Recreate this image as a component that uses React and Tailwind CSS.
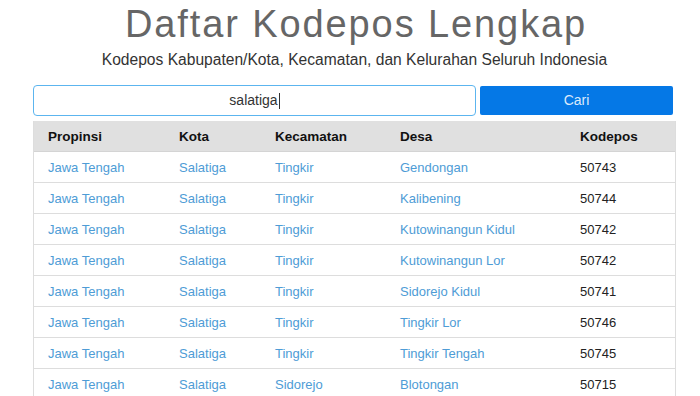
import React from "react";

const rows = [
  ["Jawa Tengah", "Salatiga", "Tingkir", "Gendongan", "50743"],
  ["Jawa Tengah", "Salatiga", "Tingkir", "Kalibening", "50744"],
  ["Jawa Tengah", "Salatiga", "Tingkir", "Kutowinangun Kidul", "50742"],
  ["Jawa Tengah", "Salatiga", "Tingkir", "Kutowinangun Lor", "50742"],
  ["Jawa Tengah", "Salatiga", "Tingkir", "Sidorejo Kidul", "50741"],
  ["Jawa Tengah", "Salatiga", "Tingkir", "Tingkir Lor", "50746"],
  ["Jawa Tengah", "Salatiga", "Tingkir", "Tingkir Tengah", "50745"],
  ["Jawa Tengah", "Salatiga", "Sidorejo", "Blotongan", "50715"],
];

export default function App() {
  return (
    <div
      className="w-[700px] h-[396px] overflow-hidden bg-white"
      style={{ fontFamily: '"Liberation Sans", Arial, sans-serif' }}
    >
      <h1 className="mt-[4px] pl-[12px] text-center text-[38px] leading-[40px] tracking-[1.9px] text-[#666666] font-normal">
        Daftar Kodepos Lengkap
      </h1>
      <p className="mt-[6px] pl-[9px] text-center text-[15.6px] leading-[20px] text-[#333333]">
        Kodepos Kabupaten/Kota, Kecamatan, dan Kelurahan Seluruh Indonesia
      </p>
      <div className="ml-[33px] w-[643px] mt-[15px]">
        <div className="flex items-center gap-[4px]">
          <div className="w-[443px] h-[31px] border-[1.5px] border-[#5cb5ef] rounded-[4px] flex items-center justify-center text-[14px] text-[#333]">
            <span>salatiga</span>
            <span className="inline-block w-[1px] h-[16px] bg-[#333] ml-[1px]"></span>
          </div>
          <div className="w-[193px] h-[29px] bg-[#0578e6] rounded-[2px] flex items-center justify-center text-[14px] text-[#dbe9fb]">
            Cari
          </div>
        </div>
        <div className="mt-[5px] border-x border-[#dddddd]">
          <div className="flex h-[31px] pt-[2px] items-center bg-[#e0e0e0] border-b border-[#d4d4d4] font-bold text-[13.5px] text-[#111]">
            <div className="w-[131px] pl-[14px]">Propinsi</div>
            <div className="w-[96px] pl-[14px]">Kota</div>
            <div className="w-[125px] pl-[14px]">Kecamatan</div>
            <div className="w-[180px] pl-[14px]">Desa</div>
            <div className="flex-1 pl-[14px]">Kodepos</div>
          </div>
          {rows.map((r, i) => (
            <div
              key={i}
              className="flex h-[31px] pt-[2px] items-center border-b border-[#dddddd] text-[13px]"
            >
              <div className="w-[131px] pl-[14px] text-[#4e9cd6]">{r[0]}</div>
              <div className="w-[96px] pl-[14px] text-[#4e9cd6]">{r[1]}</div>
              <div className="w-[125px] pl-[14px] text-[#4e9cd6]">{r[2]}</div>
              <div className="w-[180px] pl-[14px] text-[#4e9cd6]">{r[3]}</div>
              <div className="flex-1 pl-[14px] text-[#222]">{r[4]}</div>
            </div>
          ))}
        </div>
      </div>
    </div>
  );
}
